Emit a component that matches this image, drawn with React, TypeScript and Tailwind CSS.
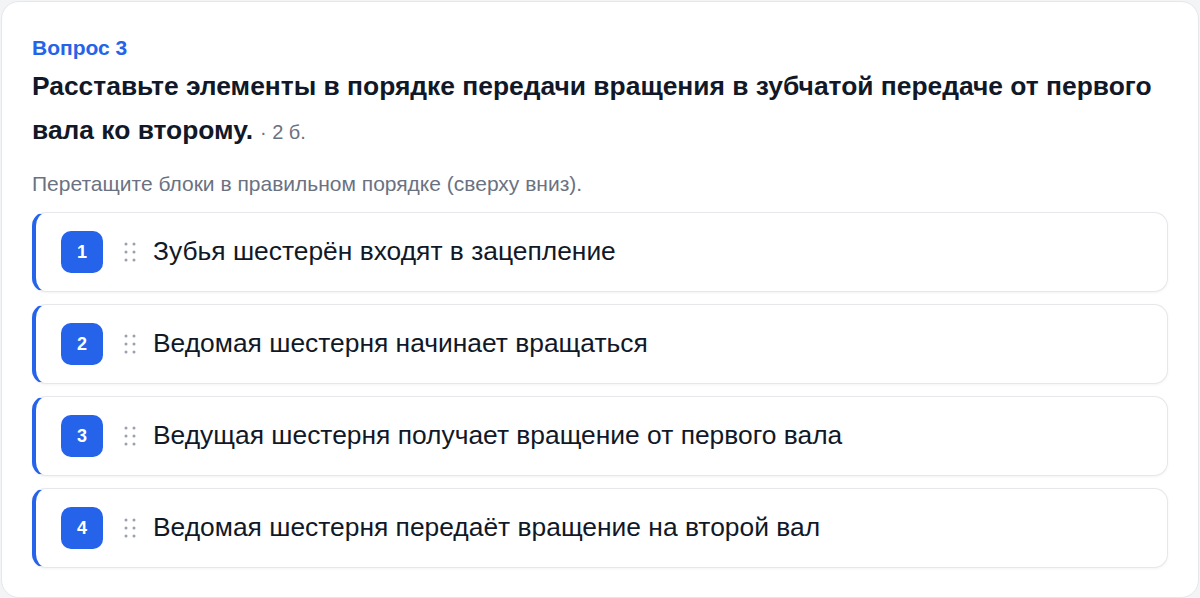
import React from "react";

const steps = [
  "Зубья шестерён входят в зацепление",
  "Ведомая шестерня начинает вращаться",
  "Ведущая шестерня получает вращение от первого вала",
  "Ведомая шестерня передаёт вращение на второй вал",
];

function GripDots() {
  return (
    <svg width="12" height="20" viewBox="0 0 12 20" className="shrink-0 text-gray-400">
      {[2, 10].map((cx) =>
        [2, 10, 18].map((cy) => <circle key={`${cx}-${cy}`} cx={cx} cy={cy} r="1.5" fill="currentColor" />)
      )}
    </svg>
  );
}

function StepRow({ index, label }: { index: number; label: string }) {
  return (
    <div className="flex h-[80px] items-center rounded-[14px] border border-gray-200 border-l-4 border-l-[#2563eb] bg-white pl-[25px] shadow-[0_1px_3px_rgba(0,0,0,0.05)]">
      <div className="flex h-[42px] w-[42px] shrink-0 items-center justify-center rounded-[10px] bg-[#2563eb] text-[18px] font-bold text-white">
        {index}
      </div>
      <div className="ml-[21px] mr-[17px]">
        <GripDots />
      </div>
      <span className="text-[26.4px] text-[#111827]">{label}</span>
    </div>
  );
}

export default function App() {
  return (
    <div
      className="min-h-[598px] bg-[#f3f4f6] p-[1px]"
      style={{ fontFamily: '"Liberation Sans", Arial, sans-serif' }}
    >
      <div className="rounded-[18px] border border-gray-200 bg-white px-[30px] pb-[29px] pt-[34px]">
        <div className="text-[21px] font-bold leading-[24px] text-[#2563eb]">Вопрос 3</div>
        <h2 className="mt-[4px] text-[26.4px] font-bold leading-[44px] text-[#111827]">
          Расставьте элементы в порядке передачи вращения в зубчатой передаче от первого вала ко второму.
          <span className="ml-[7px] text-[20px] font-normal text-gray-500">· 2 б.</span>
        </h2>
        <p className="mt-[18px] text-[21px] leading-[24px] text-gray-500">
          Перетащите блоки в правильном порядке (сверху вниз).
        </p>
        <div className="mt-[16px] flex flex-col gap-[12px]">
          {steps.map((s, i) => (
            <StepRow key={s} index={i + 1} label={s} />
          ))}
        </div>
      </div>
    </div>
  );
}
